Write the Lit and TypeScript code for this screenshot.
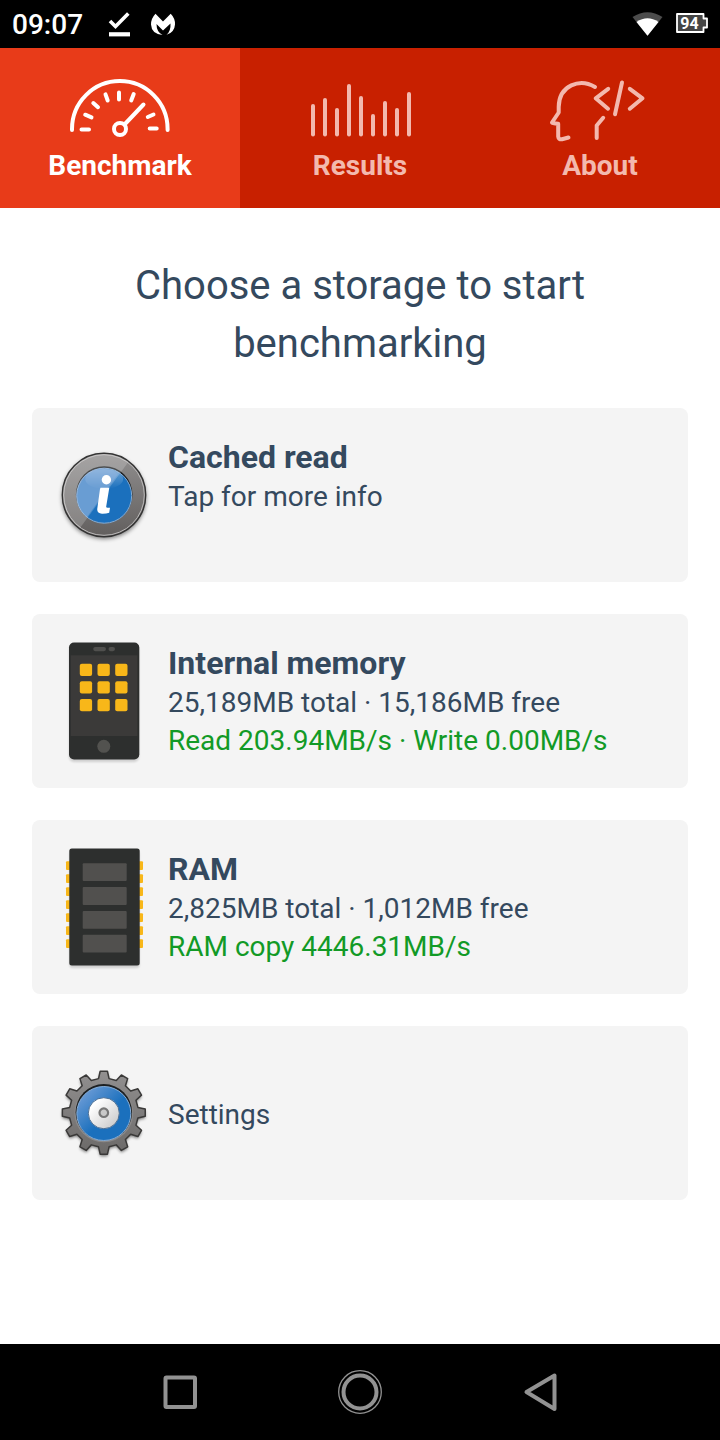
import { LitElement, html, svg, css } from "lit";
import { customElement, property, state } from "lit/decorators.js";

const gaugeIcon = svg`
  <path d="M4 54V53A47.800 48 0 0 1 99.600 53V54"/>
  <circle cx="52" cy="53" r="6"/>
  <path d="M56.500 48.500 75.500 28.500M13.500 53.500H21M81.700 52.500H88.700M17.200 38.700 23.500 41.400M79.800 41 85.500 38.500M25.300 27 30 31.200M37.500 18.300 39.700 24.500M51 16.500V23.500M65.700 18 63.200 24.500"/>`;

const barTops = [30, 24, 34, 10, 22, 40, 27, 34, 18];
const barsIcon = svg`${barTops.map((top, i) => svg`<path d="M${5 + i * 12} ${top}V58.500"/>`)}`;

const headIcon = svg`
  <path d="M47 11C32 2 11 9 10.700 31V36.500L4 46.500Q4.500 47.500 10.200 47.800V60.500Q10.500 63.700 14 63.300L20.500 61.500"/>
  <path d="M55.200 41.800 48.700 49.500V62"/>
  <path d="M60.200 12.800 47.700 22.300 60 32.700M74 6.500 67 38.200M81.800 12.800 94.500 22.300 81.800 32.700"/>`;

const infoIcon = svg`
  <defs>
    <linearGradient id="metal" x1="0" y1="0" x2="0" y2="1"><stop offset="0" stop-color="#908e8e"/><stop offset="1" stop-color="#625f5e"/></linearGradient>
    <linearGradient id="gloss" x1="0" y1="0" x2="0" y2="1"><stop offset="0" stop-color="#fff" stop-opacity=".35"/><stop offset="1" stop-color="#fff" stop-opacity="0"/></linearGradient>
    <clipPath id="disc"><circle cx="56" cy="64" r="41"/></clipPath>
    <filter id="soft" x="-20%" y="-20%" width="140%" height="140%"><feGaussianBlur stdDeviation="2"/></filter>
  </defs>
  <circle cx="56" cy="66" r="42" fill="#000" opacity=".5" filter="url(#soft)"/>
  <circle cx="56" cy="64" r="41.700" fill="url(#metal)" stroke="#333" stroke-width="1.400"/>
  <circle cx="56" cy="64" r="40.300" fill="none" stroke="#bab8b8" stroke-width="1"/>
  <circle cx="56.200" cy="63.500" r="28.300" fill="#1d2022"/>
  <circle cx="56.200" cy="64.700" r="27.500" fill="#1b70bd" stroke="#84acd5" stroke-width="1"/>
  <path d="M0 0H103L32 97H0Z" fill="#fff" opacity=".2" clip-path="url(#disc)"/>
  <ellipse cx="56.200" cy="48" rx="19" ry="10" fill="url(#gloss)"/>
  <path d="M28.800 61A27.500 27.500 0 0 0 39 86L70 43Q61 35 48 38Q32 43 28.800 61" fill="#9bb6e0" opacity=".4"/>
  <circle cx="58.400" cy="48.700" r="4.700" fill="#fff"/>
  <path d="M52.500 56.800H61.300L58.200 75.500Q58 76.800 59.500 76.800H62L61.200 81.700Q58 82.900 54 82.800Q48.600 82.500 49.300 77.500L52 58Z" fill="#fff"/>`;

const phoneIcon = svg`
  <defs><filter id="shade"><feGaussianBlur stdDeviation="1.200"/></filter></defs>
  <rect x="21" y="8" width="70" height="117" rx="5" fill="#000" opacity=".15" filter="url(#shade)"/>
  <rect x="21" y="5.500" width="70.300" height="117" rx="5" fill="#2d2f2e"/>
  <rect x="22.700" y="18.300" width="66.700" height="80.700" fill="#3b3a39"/>
  <rect x="45.200" y="10" width="12.800" height="4.200" rx="2.100" fill="#50504e"/>
  <rect x="60.500" y="10" width="6.500" height="4.200" rx="2.100" fill="#50504e"/>
  ${[0, 1, 2].map((r) => [0, 1, 2].map((c) => svg`<rect x="${31.800 + c * 17.700}" y="${26.700 + r * 17.600}" width="12.300" height="12.300" rx="2" fill="#f8b719"/>`))}
  <circle cx="55.800" cy="109.300" r="6.500" fill="#52524f"/>`;

const ramIcon = svg`
  <defs><filter id="shade"><feGaussianBlur stdDeviation="1.200"/></filter></defs>
  <rect x="21.500" y="8" width="70" height="117" rx="3" fill="#000" opacity=".15" filter="url(#shade)"/>
  ${[0, 1, 2, 3, 4, 5, 6].map((i) => svg`<rect x="18" y="${18.300 + i * 13}" width="77" height="8.700" rx="1" fill="#f8b719"/>`)}
  <rect x="21.300" y="5.400" width="70.400" height="117" rx="2.500" fill="#2d2f2e"/>
  ${[0, 1, 2, 3].map((i) => svg`<rect x="34.700" y="${20.300 + i * 23.800}" width="44" height="17.800" rx="1" fill="#51504e"/>`)}`;

/** Outline of a twelve-toothed gear around the origin. */
function gearPath(): string {
  const points: string[] = [];
  const corners = [[34.5, -8.8], [41.6, -5], [41.6, 5], [34.5, 8.8]];
  for (let tooth = 0; tooth < 12; tooth++) {
    for (const [radius, offset] of corners) {
      const angle = ((tooth * 30 + offset) * Math.PI) / 180;
      points.push(`${(Math.sin(angle) * radius).toFixed(2)} ${(-Math.cos(angle) * radius).toFixed(2)}`);
    }
  }
  return `M${points.join("L")}Z`;
}

const gearIcon = svg`
  <defs>
    <linearGradient id="steel" x1="0" y1="0" x2="0" y2="1"><stop offset="0" stop-color="#929090"/><stop offset="1" stop-color="#6b6968"/></linearGradient>
    <linearGradient id="silver" x1="0" y1="0" x2="1" y2="1"><stop offset=".2" stop-color="#fff"/><stop offset="1" stop-color="#c3c3c4"/></linearGradient>
    <linearGradient id="sky" x1="0" y1="0" x2="1" y2="1"><stop offset="0" stop-color="#7fa6dc"/><stop offset=".55" stop-color="#1b70bd"/></linearGradient>
    <filter id="soft" x="-20%" y="-20%" width="140%" height="140%"><feGaussianBlur stdDeviation="1.700"/></filter>
  </defs>
  <g transform="translate(55.800 63.700)">
    <path d="${gearPath()}" transform="translate(0 2)" fill="#000" opacity=".5" filter="url(#soft)"/>
    <path d="${gearPath()}" fill="url(#steel)" stroke="#3a3938" stroke-width="1.500" stroke-linejoin="round"/>
    <circle r="29.500" fill="#8b8989"/>
    <circle r="28.200" cy="-.4" fill="#1d2022"/>
    <circle r="27" cy=".8" fill="url(#sky)" stroke="#86aed8" stroke-width="1"/>
    <circle r="15.500" cy=".5" fill="url(#silver)" stroke="#4b6f95" stroke-width="1"/>
    <circle r="4.300" fill="#c9c9c9" stroke="#777" stroke-width="2.200"/>
  </g>`;

@customElement("status-bar")
class StatusBar extends LitElement {
  static styles = css`
    :host { display: flex; align-items: center; height: 48px; padding: 0 12px; background: #000; color: #fff; }
    .time { font-size: 28px; line-height: 32px; font-weight: 500; margin-right: 24px; padding-top: 2px; }
    .notes { flex: 1; display: flex; gap: 19px; }
    .system { display: flex; gap: 12px; }
    svg { display: block; }
    .level { font: 700 16px "Roboto", sans-serif; fill: #fff; }
  `;
  render() {
    return html`
      <span class="time">09:07</span>
      <span class="notes">
        <svg width="24" height="28" viewBox="107 10 24 28" aria-hidden="true">
          <path d="M110 21 115.500 26.500 128.300 13.500" fill="none" stroke="#fff" stroke-width="3.600"/>
          <path d="M109 32.200H130V36.400H109Z" fill="#fff"/>
        </svg>
        <svg width="26" height="28" viewBox="150 10 26 28" aria-hidden="true">
          <path d="M155.500 13.800 163 21.500 170.700 13.800Q175.300 18.500 175 24.500Q174.500 32.500 166.500 34.800Q171 31 170.500 23.500L163 30.500 156.500 24Q156.500 32 162.500 34.900Q151.500 34 151 24.500Q151 18.500 155.500 13.800Z" fill="#fff"/>
        </svg>
      </span>
      <span class="system">
        <svg width="32" height="28" viewBox="632 10 32 28" aria-hidden="true">
          <path d="M632.500 17Q647.500 7.500 662.500 17L647.500 35.800Z" fill="#4c4c4c"/>
          <path d="M636.500 22Q647.500 14.500 658.500 22L647.500 35.800Z" fill="#fff"/>
        </svg>
        <svg width="32" height="28" viewBox="676 10 32 28" role="img" aria-label="Battery 94 percent">
          <path d="M678 14H703.500V18.500H707V27.500H703.500V32H677V14Z" fill="#454545" stroke="#fff" stroke-width="1.800" stroke-linejoin="round"/>
          <text class="level" x="689.500" y="28.500" text-anchor="middle">94</text>
        </svg>
      </span>`;
  }
}

@customElement("storage-card")
class StorageCard extends LitElement {
  @property() heading = "";
  @property() detail = "";
  @property() result = "";
  @property({ attribute: false }) icon: unknown;
  static styles = css`
    :host { display: block; }
    .card {
      display: flex; align-items: center; gap: 8px; width: 100%; min-height: 174px; padding: 23px 16px;
      box-sizing: border-box; border: 0; border-radius: 8px; background: #f4f4f4; color: #34495e;
      font: inherit; font-size: 28px; line-height: 38px; text-align: left; cursor: pointer;
    }
    .icon { width: 112px; height: 128px; flex: none; overflow: visible; }
    .text { display: flex; flex-direction: column; flex: 1; min-width: 0; }
    .tall { min-height: 118px; }
    .plain { padding-top: 4px; }
    .heading { font-size: 32px; line-height: 42px; font-weight: 700; }
    .result { color: #129a26; }
  `;
  render() {
    return html`
      <button class="card" type="button">
        <svg class="icon" viewBox="0 0 112 128" aria-hidden="true">${this.icon}</svg>
        <span class="text ${this.heading ? "tall" : "plain"}">
          ${this.heading ? html`<span class="heading">${this.heading}</span>` : null}
          <span>${this.detail}</span>
          ${this.result ? html`<span class="result">${this.result}</span>` : null}
        </span>
      </button>`;
  }
}

@customElement("app-root")
class AppRoot extends LitElement {
  @state() private current = 0;

  private tabs = [
    { label: "Benchmark", icon: gaugeIcon },
    { label: "Results", icon: barsIcon },
    { label: "About", icon: headIcon },
  ];

  private cards = [
    { heading: "Cached read", detail: "Tap for more info", result: "", icon: infoIcon },
    { heading: "Internal memory", detail: "25,189MB total · 15,186MB free", result: "Read 203.94MB/s · Write 0.00MB/s", icon: phoneIcon },
    { heading: "RAM", detail: "2,825MB total · 1,012MB free", result: "RAM copy 4446.31MB/s", icon: ramIcon },
    { heading: "", detail: "Settings", result: "", icon: gearIcon },
  ];

  static styles = css`
    :host { display: flex; flex-direction: column; min-height: 100vh; background: #fff; font-family: "Roboto", sans-serif; }
    .tabs { display: grid; grid-template-columns: repeat(3, 1fr); background: #c82000; }
    .tab {
      display: flex; flex-direction: column; align-items: center; gap: 8px; padding: 28px 0 24px;
      border: 0; background: none; color: #f3b9ae; font: inherit; font-size: 28px; line-height: 36px; font-weight: 700; cursor: pointer;
    }
    .active { background: #e83b19; color: #fff; }
    .glyph { width: 104px; height: 64px; overflow: visible; fill: none; stroke: currentColor; stroke-width: 4; stroke-linecap: round; stroke-linejoin: round; }
    main { flex: 1; padding: 49px 32px 48px; }
    h1 { margin: 0 auto 35px; max-width: 520px; text-align: center; font-size: 40px; line-height: 58px; font-weight: 400; color: #34495e; }
    .list { display: grid; gap: 32px; }
    .keys { display: grid; grid-template-columns: repeat(3, 1fr); padding: 0 12.5%; height: 96px; background: #000; }
    .key { display: grid; place-items: center; border: 0; padding: 0; background: none; color: #929292; cursor: pointer; }
    .key svg { width: 48px; height: 48px; fill: none; stroke: currentColor; stroke-width: 4; stroke-linejoin: round; }
  `;

  render() {
    return html`
      <status-bar></status-bar>
      <nav class="tabs">
        ${this.tabs.map((tab, i) => html`
          <button type="button" class="tab ${i === this.current ? "active" : ""}" @click=${() => (this.current = i)}>
            <svg class="glyph" viewBox="0 0 104 64" aria-hidden="true">${tab.icon}</svg>
            <span>${tab.label}</span>
          </button>`)}
      </nav>
      <main>
        <h1>Choose a storage to start benchmarking</h1>
        <div class="list">
          ${this.cards.map((card) => html`<storage-card .heading=${card.heading} .detail=${card.detail} .result=${card.result} .icon=${card.icon}></storage-card>`)}
        </div>
      </main>
      <footer class="keys">
        <button type="button" class="key" aria-label="Recent apps"><svg viewBox="0 0 48 48"><rect x="9.500" y="9.500" width="29.500" height="29.500" rx="1"/></svg></button>
        <button type="button" class="key" aria-label="Home"><svg viewBox="0 0 48 48"><circle cx="24" cy="24" r="16.500"/><circle cx="24" cy="24" r="21.300" stroke-width="1.300"/></svg></button>
        <button type="button" class="key" aria-label="Back"><svg viewBox="0 0 48 48"><path d="M10.500 24 38.500 7.500V41Z"/></svg></button>
      </footer>`;
  }
}
